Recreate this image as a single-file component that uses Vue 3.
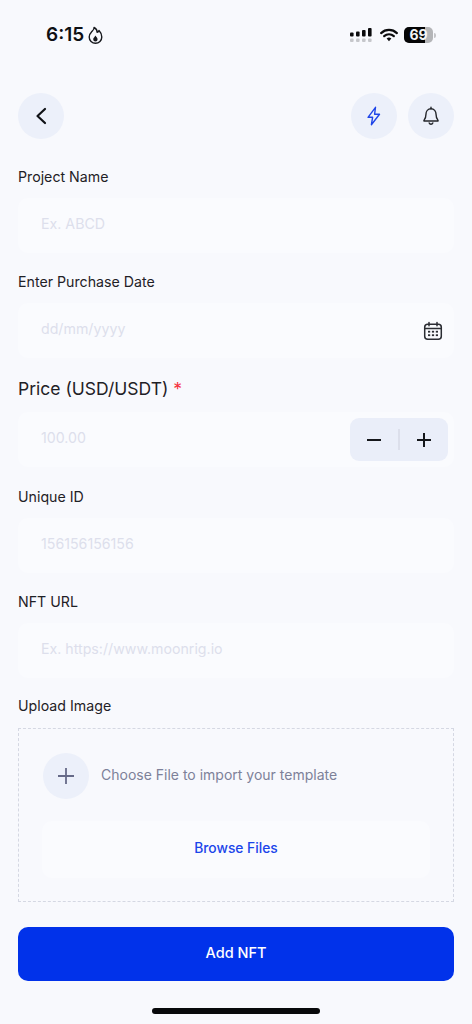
<script setup>
const simpleTop = [
  { label: 'Project Name', placeholder: 'Ex. ABCD' },
]
const simpleBottom = [
  { label: 'Unique ID', placeholder: '156156156156' },
  { label: 'NFT URL', placeholder: 'Ex. https://www.moonrig.io' },
]
</script>

<template>
  <div class="page">
    <div class="status">
      <div class="status-left">
        <span class="time">6:15</span>
        <svg class="flame" width="15" height="18" viewBox="0 0 15 18" fill="none">
          <path d="M6 1.500C6.500 3.500 5 4.500 3.500 6 2 7.500 1.200 9 1.200 11a6.300 6.300 0 0 0 12.600 0C13.800 8 12.500 6 11 4.500 10.700 5.700 10 6.200 9.200 6.400 9.200 4 8 2.500 6 1.500Z" stroke="#16181d" stroke-width="1.400" stroke-linejoin="round"/>
          <path d="M7.500 9.500C8 10.800 9.600 11.600 9.600 13.300a2.200 2.200 0 0 1-4.400 0C5.200 11.900 6.700 11 7.500 9.500Z" fill="#16181d"/>
        </svg>
      </div>
      <div class="status-right">
        <svg width="22" height="14" viewBox="0 0 22 14">
          <g fill="#0b0b0d">
            <rect x="0" y="4.500" width="3.600" height="4" rx="1"/>
            <rect x="6" y="3.500" width="3.600" height="5" rx="1"/>
            <rect x="12" y="2" width="3.600" height="6.500" rx="1"/>
            <rect x="18" y="0" width="3.600" height="8.500" rx="1"/>
          </g>
          <g fill="#c6c7cb">
            <rect x="0" y="10.500" width="3.600" height="3.500" rx="1"/>
            <rect x="6" y="10.500" width="3.600" height="3.500" rx="1"/>
            <rect x="12" y="10.500" width="3.600" height="3.500" rx="1"/>
            <rect x="18" y="10.500" width="3.600" height="3.500" rx="1"/>
          </g>
        </svg>
        <svg class="wifi" width="18" height="14" viewBox="0 0 19 14" fill="none">
          <path d="M1.200 5a12 12 0 0 1 16.600 0" stroke="#0b0b0d" stroke-width="2.300" stroke-linecap="round"/>
          <path d="M4.400 8.200a7.500 7.500 0 0 1 10.200 0" stroke="#0b0b0d" stroke-width="2.300" stroke-linecap="round"/>
          <path d="M7 10.800a3.500 3.500 0 0 1 5 0L9.500 13.600Z" fill="#0b0b0d"/>
        </svg>
        <div class="battery">
          <div class="battery-body">
            <div class="battery-fill"></div>
            <span class="battery-text">69</span>
          </div>
          <div class="battery-cap"></div>
        </div>
      </div>
    </div>

    <header class="topbar">
      <button class="round">
        <svg width="16" height="20" viewBox="0 0 16 20" fill="none">
          <path d="M12 3 4.500 10l7.500 7" stroke="#101216" stroke-width="2.200" stroke-linecap="round" stroke-linejoin="round"/>
        </svg>
      </button>
      <div class="topbar-right">
        <button class="round">
          <svg width="16" height="20" viewBox="0 0 16 20" fill="none">
            <path d="M9.500 1.300 2 11.300h4.600l-1.200 7.400 8.100-10.500H8.600l.9-6.900Z" stroke="#1f45e8" stroke-width="1.400" stroke-linejoin="round"/>
          </svg>
        </button>
        <button class="round">
          <svg width="18" height="20" viewBox="0 0 18 20" fill="none">
            <path d="M9 2.800c-3.200 0-5 2.500-5 5.300 0 3.400-.7 4.700-2 6.300-.2.300 0 .6.300.6h13.400c.3 0 .5-.3.300-.6-1.300-1.600-2-2.900-2-6.300 0-2.800-1.800-5.300-5-5.300Z" stroke="#23252a" stroke-width="1.400" stroke-linejoin="round"/>
            <path d="M7.200 17a1.900 1.900 0 0 0 3.600 0M9 1.200v1.600" stroke="#23252a" stroke-width="1.400" stroke-linecap="round"/>
          </svg>
        </button>
      </div>
    </header>

    <form class="form" @submit.prevent>
      <div v-for="f in simpleTop" :key="f.label" class="field">
        <label class="label">{{ f.label }}</label>
        <div class="input"><span class="ph">{{ f.placeholder }}</span></div>
      </div>

      <div class="field">
        <label class="label">Enter Purchase Date</label>
        <div class="input">
          <span class="ph">dd/mm/yyyy</span>
          <svg class="cal" width="20" height="20" viewBox="0 0 20 20" fill="none">
            <rect x="1.700" y="3.300" width="16.600" height="15" rx="3" stroke="#2b2d33" stroke-width="1.500"/>
            <path d="M2 7.500h16M6 1.500v3.200M14 1.500v3.200" stroke="#2b2d33" stroke-width="1.500" stroke-linecap="round"/>
            <g fill="#2b2d33">
              <rect x="5" y="9.800" width="2.200" height="1.800"/>
              <rect x="8.900" y="9.800" width="2.200" height="1.800"/>
              <rect x="12.800" y="9.800" width="2.200" height="1.800"/>
              <rect x="5" y="13.300" width="2.200" height="1.800"/>
              <rect x="8.900" y="13.300" width="2.200" height="1.800"/>
              <rect x="12.800" y="13.300" width="2.200" height="1.800"/>
            </g>
          </svg>
        </div>
      </div>

      <div class="field field-price">
        <label class="label label-lg">Price (USD/USDT) <span class="req">*</span></label>
        <div class="input input-price">
          <span class="ph">100.00</span>
          <div class="stepper">
            <span class="step"><svg width="16" height="16" viewBox="0 0 16 16"><path d="M1 8h14" stroke="#15171b" stroke-width="2"/></svg></span>
            <span class="divider"></span>
            <span class="step"><svg width="16" height="16" viewBox="0 0 16 16"><path d="M1 8h14M8 1v14" stroke="#15171b" stroke-width="2"/></svg></span>
          </div>
        </div>
      </div>

      <div v-for="f in simpleBottom" :key="f.label" class="field">
        <label class="label">{{ f.label }}</label>
        <div class="input"><span class="ph">{{ f.placeholder }}</span></div>
      </div>

      <div class="field upload-field">
        <label class="label label-upload">Upload Image</label>
        <div class="upload">
          <div class="upload-row">
            <span class="plus">
              <svg width="18" height="18" viewBox="0 0 18 18"><path d="M1 9h16M9 1v16" stroke="#666a88" stroke-width="1.800"/></svg>
            </span>
            <span class="upload-text">Choose File to import your template</span>
          </div>
          <div class="browse">Browse Files</div>
        </div>
      </div>

      <button class="submit" type="submit">Add NFT</button>
    </form>

    <div class="home"></div>
  </div>
</template>

<style>
body {
  margin: 0;
  background: #f8f9fd;
}
</style>

<style scoped>
.page {
  width: 472px;
  height: 1024px;
  box-sizing: border-box;
  background: #f8f9fd;
  font-family: Inter, "Liberation Sans", sans-serif;
  color: #1b1d22;
  position: relative;
  overflow: hidden;
}
.status {
  height: 70px;
  padding: 0 36px 0 46px;
  display: flex;
  justify-content: space-between;
  align-items: center;
}
.status-left {
  display: flex;
  align-items: center;
  gap: 4px;
}
.time {
  font-size: 19px;
  font-weight: 600;
  line-height: 22px;
  color: #0e1014;
}
.status-right {
  display: flex;
  align-items: center;
  gap: 6px;
}
.wifi {
  margin-left: 2px;
}
.battery {
  display: flex;
  align-items: center;
  gap: 1px;
}
.battery-body {
  position: relative;
  width: 29px;
  height: 16px;
  border-radius: 5px;
  background: #b4b5b8;
  overflow: hidden;
}
.battery-fill {
  width: 72%;
  height: 100%;
  background: #050506;
}
.battery-text {
  position: absolute;
  inset: 0;
  text-align: center;
  font-size: 14px;
  line-height: 16px;
  font-weight: 700;
  color: #f4f5f7;
}
.battery-cap {
  width: 2px;
  height: 5px;
  border-radius: 0 2px 2px 0;
  background: #c4c5c8;
}
.topbar {
  margin-top: 23px;
  padding: 0 18px;
  display: flex;
  justify-content: space-between;
}
.topbar-right {
  display: flex;
  gap: 11px;
}
.round {
  width: 46px;
  height: 46px;
  border: 0;
  padding: 0;
  border-radius: 50%;
  background: #ecf0fa;
  display: flex;
  align-items: center;
  justify-content: center;
}
.form {
  margin-top: 28px;
  padding: 0 18px;
  display: flex;
  flex-direction: column;
}
.field {
  margin-bottom: 19px;
}
.field-price {
  margin-bottom: 20px;
}
.label {
  display: block;
  font-size: 14.200px;
  line-height: 20px;
  color: #1f2126;
  margin-bottom: 11px;
}
.label-lg {
  font-size: 17.500px;
  line-height: 24px;
}
.upload-field {
  margin-top: -1px;
}
.label-upload {
  margin-bottom: 12px;
}
.req {
  color: #f5333f;
}
.input {
  height: 55px;
  border-radius: 10px;
  background: #fafbfe;
  padding: 0 11px 0 23px;
  display: flex;
  align-items: center;
  justify-content: space-between;
}
.input-price {
  padding-right: 6px;
}
.ph {
  font-size: 14.200px;
  line-height: 18px;
  margin-bottom: 4px;
  color: #dddfec;
}
.cal {
  flex: none;
}
.stepper {
  width: 98px;
  height: 43px;
  border-radius: 9px;
  background: #eaeef9;
  display: flex;
  align-items: center;
  justify-content: space-between;
}
.step {
  width: 48px;
  display: flex;
  justify-content: center;
}
.divider {
  width: 2px;
  height: 21px;
  background: #dcdfeb;
}
.upload {
  height: 174px;
  box-sizing: border-box;
  border: 1px dashed #d5d8e3;
  padding: 24px 23px 0;
  display: flex;
  flex-direction: column;
}
.upload-row {
  display: flex;
  align-items: center;
  gap: 12px;
  padding-left: 1px;
}
.plus {
  width: 46px;
  height: 46px;
  border-radius: 50%;
  background: #ecf0fa;
  display: flex;
  align-items: center;
  justify-content: center;
  flex: none;
}
.upload-text {
  font-size: 14px;
  line-height: 18px;
  margin-bottom: 3px;
  color: #7d8199;
}
.browse {
  margin-top: 22px;
  height: 57px;
  box-sizing: border-box;
  padding-bottom: 4px;
  border-radius: 10px;
  background: #fafbfe;
  display: flex;
  align-items: center;
  justify-content: center;
  font-size: 13.800px;
  font-weight: 500;
  color: #1a45ea;
}
.submit {
  margin-top: 6px;
  height: 54px;
  padding: 0 0 4px;
  border: 0;
  border-radius: 10px;
  background: #0132ea;
  color: #fff;
  font-family: inherit;
  font-size: 14.500px;
  font-weight: 500;
}
.home {
  position: absolute;
  left: 152px;
  top: 1008px;
  width: 168px;
  height: 6px;
  border-radius: 3px;
  background: #08090b;
}
</style>
